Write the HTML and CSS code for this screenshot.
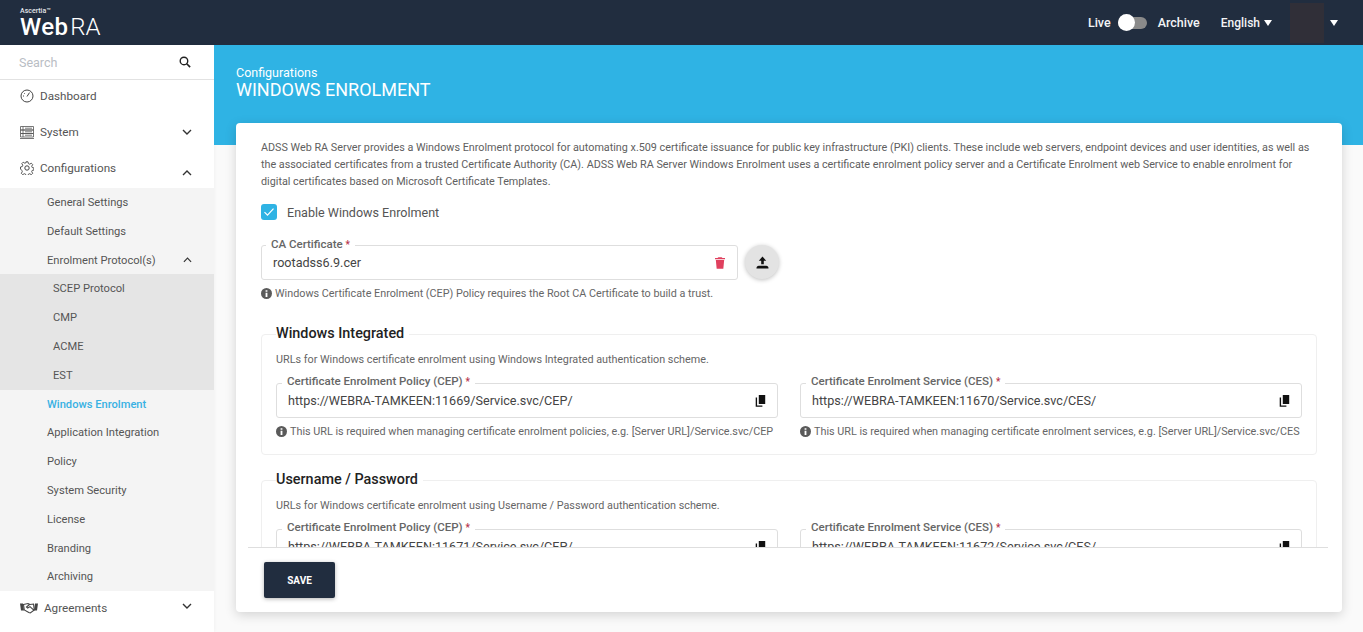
FILE: index.html
```html
<!DOCTYPE html>
<html lang="en">
<head>
<meta charset="utf-8">
<title>Windows Enrolment</title>
<link rel="stylesheet" href="styles.css">
</head>
<body>
<header class="topbar">
  <div class="logo"><span class="logo-small">Ascertia™</span><span class="logo-main">Web<span class="logo-ra">RA</span></span></div>
  <div class="top-right">
    <span class="top-label">Live</span>
    <span class="toggle"><span class="knob"></span></span>
    <span class="top-label archive">Archive</span>
    <span class="top-label lang">English</span><span class="caret lang-caret"></span>
    <span class="avatar"></span>
    <span class="caret"></span>
  </div>
</header>
<div class="body-row">
  <aside class="sidebar">
    <div class="search">
      <span class="search-text">Search</span>
      <svg class="search-icon" viewBox="0 0 14 14" width="12" height="12"><circle cx="5.8" cy="5.8" r="4.4" fill="none" stroke="#222" stroke-width="1.6"/><path d="M9 9L13 13" stroke="#222" stroke-width="1.9"/></svg>
    </div>
    <a class="nav-item">
      <svg class="nav-icon" viewBox="0 0 14 14" width="14" height="14"><circle cx="7" cy="7" r="6" fill="none" stroke="#444" stroke-width="1"/><path d="M7 7.5L9.5 3.6M3 7h1M4.2 4.2l.7.7" stroke="#444" stroke-width="1" fill="none"/></svg>
      <span>Dashboard</span>
    </a>
    <a class="nav-item">
      <svg class="nav-icon" viewBox="0 0 14 14" width="14" height="14"><path d="M.5 1.500h13v3.500H.5zM.5 5h13v3.500H.5zM.5 8.500h13V12H.5zM0 13.500h14M3 1.500V12M5 3.200h7M5 6.800h7M5 10.200h7" fill="none" stroke="#555" stroke-width=".8"/></svg>
      <span>System</span>
      <svg class="chev" viewBox="0 0 10 6" width="10" height="6"><path d="M1 1l4 4 4-4" fill="none" stroke="#333" stroke-width="1.400"/></svg>
    </a>
    <a class="nav-item">
      <svg class="nav-icon" viewBox="0 0 14 14" width="14" height="14"><circle cx="7" cy="7" r="2.200" fill="none" stroke="#444"/><path d="M6 .8h2l.4 1.800 1.300.6 1.600-1 1.400 1.400-1 1.600.5 1.300 1.800.5v2l-1.800.4-.5 1.300 1 1.600-1.400 1.400-1.600-1-1.300.5-.4 1.800H6l-.4-1.800-1.300-.5-1.600 1-1.400-1.400 1-1.600-.5-1.300L.5 8V6l1.800-.5.5-1.300-1-1.600 1.400-1.400 1.600 1 1.300-.6z" fill="none" stroke="#444" stroke-width=".9"/></svg>
      <span>Configurations</span>
      <svg class="chev chev-low" viewBox="0 0 10 6" width="10" height="6"><path d="M1 5l4-4 4 4" fill="none" stroke="#333" stroke-width="1.400"/></svg>
    </a>
    <div class="sub">
      <a class="sub-item">General Settings</a>
      <a class="sub-item">Default Settings</a>
      <a class="sub-item">Enrolment Protocol(s)<svg class="chev" viewBox="0 0 10 6" width="9" height="6"><path d="M1 5l4-4 4 4" fill="none" stroke="#333" stroke-width="1.300"/></svg></a>
      <div class="nested">
        <a class="sub-item">SCEP Protocol</a>
        <a class="sub-item">CMP</a>
        <a class="sub-item">ACME</a>
        <a class="sub-item">EST</a>
      </div>
      <a class="sub-item active">Windows Enrolment</a>
      <a class="sub-item">Application Integration</a>
      <a class="sub-item">Policy</a>
      <a class="sub-item">System Security</a>
      <a class="sub-item">License</a>
      <a class="sub-item">Branding</a>
      <a class="sub-item">Archiving</a>
    </div>
    <a class="nav-item agreements">
      <svg class="nav-icon wide" viewBox="0 0 18 12" width="18" height="12"><path d="M0 1.500h3l1 7H1zM18 1.500h-3l-1 7h3z" fill="#444"/><path d="M3.500 2.500L8 1.500l2 1 3.500-.5.8 6-4 3-1.500-.5-4.500-2.500zM9.500 2.500L6.500 5l1.200 1L10 4.600l3.500 3.200" fill="none" stroke="#444" stroke-width="1.100"/></svg>
      <span>Agreements</span>
      <svg class="chev chev-high" viewBox="0 0 10 6" width="10" height="6"><path d="M1 1l4 4 4-4" fill="none" stroke="#333" stroke-width="1.400"/></svg>
    </a>
  </aside>
  <main class="main">
    <section class="banner">
      <div class="crumb">Configurations</div>
      <h1 class="title">WINDOWS ENROLMENT</h1>
    </section>
    <section class="card">
      <div class="card-scroll">
        <p class="intro">ADSS Web RA Server provides a Windows Enrolment protocol for automating x.509 certificate issuance for public key infrastructure (PKI) clients. These include web servers, endpoint devices and user identities, as well as the associated certificates from a trusted Certificate Authority (CA). ADSS Web RA Server Windows Enrolment uses a certificate enrolment policy server and a Certificate Enrolment web Service to enable enrolment for digital certificates based on Microsoft Certificate Templates.</p>
        <label class="check-row">
          <span class="checkbox"><svg viewBox="0 0 16 16" width="16" height="16"><path d="M3.500 8.200l3 3 6-6.500" fill="none" stroke="#fff" stroke-width="1.200"/></svg></span>
          <span>Enable Windows Enrolment</span>
        </label>
        <div class="ca-row">
          <div class="field ca-field">
            <span class="legend">CA Certificate <em>*</em></span>
            <span class="value">rootadss6.9.cer</span>
            <svg class="trash" viewBox="0 0 12 14" width="10" height="12"><path d="M4 0h4l1 1h3v1.500H0V1h3zM1 3.500h10L10 14H2z" fill="#e0405e"/></svg>
          </div>
          <button class="upload" type="button"><svg viewBox="0 0 14 14" width="13" height="13"><path d="M7 .5L3 5h2.600v4h2.800V5H11z" fill="#111"/><path d="M0.500 13.500c0-2 1-3 2.500-3h8c1.500 0 2.500 1 2.500 3z" fill="#111"/></svg></button>
        </div>
        <p class="hint ca-hint"><svg class="info" viewBox="0 0 12 12" width="11" height="11"><circle cx="6" cy="6" r="6" fill="#5a5a5a"/><path d="M5 2.500h2v1.500H5zM5 5.200h2V9.800H5z" fill="#fff"/></svg>Windows Certificate Enrolment (CEP) Policy requires the Root CA Certificate to build a trust.</p>

        <fieldset class="group">
          <legend class="group-title">Windows Integrated</legend>
          <p class="group-desc">URLs for Windows certificate enrolment using Windows Integrated authentication scheme.</p>
          <div class="group-grid">
            <div class="url-col">
              <div class="field">
                <span class="legend">Certificate Enrolment Policy (CEP) <em>*</em></span>
                <span class="value">https://WEBRA-TAMKEEN:11669/Service.svc/CEP/</span>
                <svg class="copy" viewBox="0 0 12 14" width="11" height="12"><path d="M4 0h7.500v10.500H4z" fill="#111"/><path d="M1.200 3v10h7" fill="none" stroke="#111" stroke-width="1.600"/></svg>
              </div>
              <p class="hint"><svg class="info" viewBox="0 0 12 12" width="11" height="11"><circle cx="6" cy="6" r="6" fill="#5a5a5a"/><path d="M5 2.500h2v1.500H5zM5 5.200h2V9.800H5z" fill="#fff"/></svg>This URL is required when managing certificate enrolment policies, e.g. [Server URL]/Service.svc/CEP</p>
            </div>
            <div class="url-col">
              <div class="field">
                <span class="legend">Certificate Enrolment Service (CES) <em>*</em></span>
                <span class="value">https://WEBRA-TAMKEEN:11670/Service.svc/CES/</span>
                <svg class="copy" viewBox="0 0 12 14" width="11" height="12"><path d="M4 0h7.500v10.500H4z" fill="#111"/><path d="M1.200 3v10h7" fill="none" stroke="#111" stroke-width="1.600"/></svg>
              </div>
              <p class="hint"><svg class="info" viewBox="0 0 12 12" width="11" height="11"><circle cx="6" cy="6" r="6" fill="#5a5a5a"/><path d="M5 2.500h2v1.500H5zM5 5.200h2V9.800H5z" fill="#fff"/></svg>This URL is required when managing certificate enrolment services, e.g. [Server URL]/Service.svc/CES</p>
            </div>
          </div>
        </fieldset>

        <fieldset class="group">
          <legend class="group-title">Username / Password</legend>
          <p class="group-desc">URLs for Windows certificate enrolment using Username / Password authentication scheme.</p>
          <div class="group-grid">
            <div class="url-col">
              <div class="field">
                <span class="legend">Certificate Enrolment Policy (CEP) <em>*</em></span>
                <span class="value">https://WEBRA-TAMKEEN:11671/Service.svc/CEP/</span>
                <svg class="copy" viewBox="0 0 12 14" width="11" height="12"><path d="M4 0h7.500v10.500H4z" fill="#111"/><path d="M1.200 3v10h7" fill="none" stroke="#111" stroke-width="1.600"/></svg>
              </div>
            </div>
            <div class="url-col">
              <div class="field">
                <span class="legend">Certificate Enrolment Service (CES) <em>*</em></span>
                <span class="value">https://WEBRA-TAMKEEN:11672/Service.svc/CES/</span>
                <svg class="copy" viewBox="0 0 12 14" width="11" height="12"><path d="M4 0h7.500v10.500H4z" fill="#111"/><path d="M1.200 3v10h7" fill="none" stroke="#111" stroke-width="1.600"/></svg>
              </div>
            </div>
          </div>
        </fieldset>
      </div>
      <div class="card-footer">
        <button class="save" type="button">SAVE</button>
      </div>
    </section>
  </main>
</div>
</body>
</html>
```
FILE: styles.css
```css
* { box-sizing: border-box; }
html, body { margin: 0; height: 632px; overflow: hidden; }
body { font-family: Roboto, "Liberation Sans", sans-serif; color: #444; background: #fafafa; display: flex; flex-direction: column; }
p { margin: 0; }

.topbar { height: 45px; flex: none; background: #212d3f; display: flex; align-items: center; justify-content: space-between; padding: 0 25px 0 20px; color: #fff; }
.logo { display: flex; flex-direction: column; line-height: 1; padding-top: 4px; }
.logo-small { font-size: 7px; font-weight: 500; height: 7px; color: #e4e6ea; }
.logo-main { font-size: 24px; font-weight: 500; letter-spacing: .4px; height: 26px; }
.logo-ra { margin-left: 2px; font-weight: 300; letter-spacing: 0; }
.top-right { display: flex; align-items: center; font-size: 12.500px; font-weight: 500; }
.top-label { color: #f3f4f6; }
.toggle { width: 29px; height: 12px; border-radius: 6px; background: #8a8a8a; margin: 0 11px 0 7px; position: relative; display: block; }
.knob { position: absolute; left: 0; top: -2.500px; width: 17px; height: 17px; border-radius: 50%; background: #fff; }
.lang { margin-left: 21px; font-size: 12px; }
.caret { width: 0; height: 0; border-left: 4px solid transparent; border-right: 4px solid transparent; border-top: 6px solid #fff; }
.lang-caret { margin-left: 4px; }
.avatar { width: 34px; height: 40px; background: #302f38; margin: 0 6px 0 18px; }

.body-row { flex: 1; display: flex; min-height: 0; }
.sidebar { width: 214px; flex: none; background: #fff; overflow: hidden; font-size: 12px; box-shadow: 1px 0 3px rgba(0,0,0,.03); }
.search { height: 35px; display: flex; align-items: center; justify-content: space-between; padding: 0 23px 0 19px; border-bottom: 1px solid #e2e2e2; }
.search-text { font-size: 12.500px; color: #b9bdc4; }
.nav-item { height: 36px; display: flex; align-items: center; padding: 0 22px 4px 20px; color: #555; font-size: 11.700px; }
.nav-icon { margin-right: 6px; flex: none; }
.nav-icon.wide { margin-right: 6px; }
.chev { margin-left: auto; }
.chev-low { margin-top: 10px; }
.chev-high { margin-top: -4px; }
.sub { background: #f4f4f4; padding-top: .15px; }
.sub-item { height: 28.800px; display: flex; align-items: center; padding: 0 22px 0 47px; color: #555; font-size: 11.150px; }
.nested { background: #e5e5e5; margin-top: -.1px; padding-top: .1px; }
.nested .sub-item { padding-left: 53px; }
.sub-item.active { color: #38b1e3; font-weight: 500; }
.agreements { height: 34px; padding-bottom: 0; }

.main { flex: 1; min-width: 0; display: flex; flex-direction: column; }
.banner { height: 100px; flex: none; background: #2fb3e4; color: #fff; padding: 21px 22px 0; }
.crumb { font-size: 12.500px; line-height: 14px; }
.title { margin: 0; font-size: 18px; line-height: 20px; font-weight: 400; }
.card { margin: -22px 21px 0 22px; height: 489px; flex: none; background: #fff; border-radius: 4px; box-shadow: 0 3px 12px rgba(0,0,0,.16); display: flex; flex-direction: column; position: relative; }
.card-scroll { height: 424px; overflow: hidden; padding: 16px 25px 0; }
.intro { font-size: 10.790px; line-height: 17px; color: #606060; }
.check-row { display: flex; align-items: center; gap: 10px; font-size: 12.550px; color: #555; margin-top: 13px; height: 18px; }
.checkbox { width: 16px; height: 16px; border-radius: 3px; background: #2fb3e4; display: block; }
.checkbox svg { display: block; }
.ca-row { display: flex; align-items: flex-start; gap: 7px; margin-top: 24px; }
.field { position: relative; height: 35px; border: 1px solid #dedede; border-radius: 3px; display: flex; align-items: center; padding: 0 9px 0 11px; background: #fff; }
.ca-field { width: 477px; }
.legend { position: absolute; left: 5px; top: -10px; padding: 0 5px; background: #fff; font-size: 11.500px; line-height: 15px; font-weight: 500; color: #666; white-space: nowrap; }
.ca-field .legend { left: 4px; top: -9px; }
.legend em { color: #b7344c; font-style: normal; font-size: 10px; }
.value { font-size: 12.600px; color: #444; white-space: nowrap; }
.trash { margin-left: auto; margin-right: 3px; }
.copy { margin-left: auto; margin-right: 2px; }
.upload { width: 34px; height: 34px; border-radius: 50%; border: 0; background: #e3e3e3; box-shadow: 0 1px 4px rgba(0,0,0,.25); display: flex; align-items: center; justify-content: center; padding: 0; }
.hint { font-size: 10.800px; line-height: 13px; color: #666; margin-top: 7px; white-space: nowrap; }
.ca-hint { margin-top: 7px; }
.info { vertical-align: -1.500px; margin-right: 3px; }
.group { margin: 0; border: 1px solid #efefef; border-radius: 4px; padding: 0 14px 16px; min-width: 0; }
.ca-hint + .group { margin-top: 25px; }
.group + .group { margin-top: 16px; }
.group-title { padding: 0 5px 1px 0; margin-left: 0; font-size: 14.400px; line-height: 18px; font-weight: 500; color: #222; }
.group-desc { font-size: 10.800px; line-height: 13px; color: #666; margin-top: 9px; }
.group-grid { display: grid; grid-template-columns: 502px 502px; column-gap: 22px; margin-top: 17px; }
.card-footer { flex: 1; margin: 0 14px 0 12px; border-top: 1px solid #dedede; padding: 14px 16px 0; }
.save { width: 71px; height: 36px; border: 0; border-radius: 2px; background: #212d3f; color: #fff; font-family: inherit; font-size: 10px; font-weight: 700; box-shadow: 0 1px 4px rgba(0,0,0,.3); }
```
